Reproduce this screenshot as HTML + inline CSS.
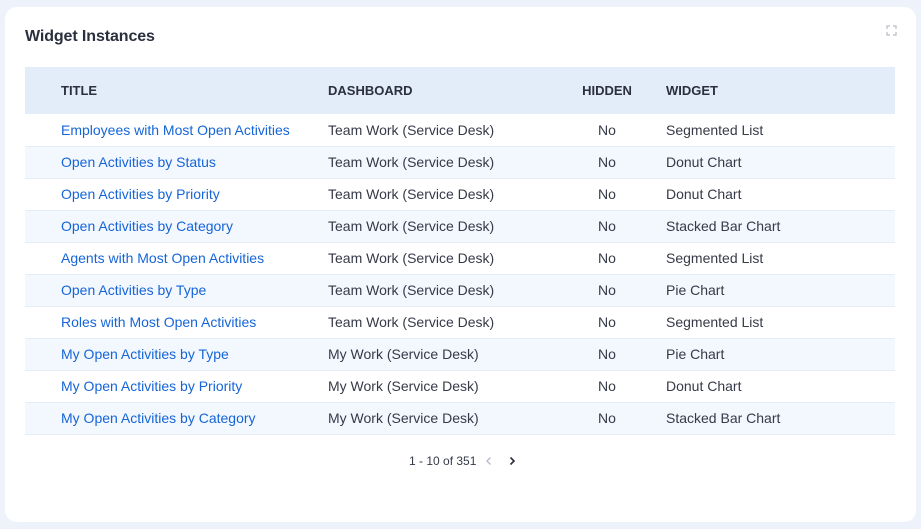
<!DOCTYPE html>
<html><head><meta charset="utf-8"><style>
*{margin:0;padding:0;box-sizing:border-box}
body{width:921px;height:529px;background:#eef3fb;font-family:"Liberation Sans",Arial,sans-serif;position:relative;overflow:hidden}
.card{position:absolute;left:5px;top:7px;width:911px;height:515px;background:#fff;border-radius:12px}
h1{position:absolute;left:20px;top:21px;font-size:16px;font-weight:bold;color:#2b2f3e;letter-spacing:-0.1px}
.exp{position:absolute;left:881px;top:18px}
table{position:absolute;left:20px;top:60px;width:870px;border-collapse:collapse;font-size:14px;color:#363a48;table-layout:fixed}
th{height:47px;background:#e3edfa;text-align:left;font-size:13px;font-weight:bold;color:#2b2f3e}
td{height:32px;border-bottom:1px solid #e6edf7;white-space:nowrap}
tr:nth-child(odd) td{background:#f3f7fe}
td a{color:#1565d8;text-decoration:none}
.c1{padding-left:36px;width:303px}
.c2{width:240px}
.c3{width:78px;text-align:center}
.c4{padding-left:20px}
.pg{position:absolute;left:404px;top:447px;font-size:12px;color:#363a48}
</style></head><body>
<div class="card">
<h1>Widget Instances</h1>
<svg class="exp" width="11" height="11" viewBox="0 0 11 11" fill="none" stroke="#b8bcc6" stroke-width="1.2"><path d="M1 4V1h3M7 1h3v3M10 7v3H7M4 10H1V7"/></svg>
<table>
<tr><th class="c1">TITLE</th><th class="c2">DASHBOARD</th><th class="c3">HIDDEN</th><th class="c4">WIDGET</th></tr>
<tr><td class="c1"><a>Employees with Most Open Activities</a></td><td>Team Work (Service Desk)</td><td class="c3">No</td><td class="c4">Segmented List</td></tr>
<tr><td class="c1"><a>Open Activities by Status</a></td><td>Team Work (Service Desk)</td><td class="c3">No</td><td class="c4">Donut Chart</td></tr>
<tr><td class="c1"><a>Open Activities by Priority</a></td><td>Team Work (Service Desk)</td><td class="c3">No</td><td class="c4">Donut Chart</td></tr>
<tr><td class="c1"><a>Open Activities by Category</a></td><td>Team Work (Service Desk)</td><td class="c3">No</td><td class="c4">Stacked Bar Chart</td></tr>
<tr><td class="c1"><a>Agents with Most Open Activities</a></td><td>Team Work (Service Desk)</td><td class="c3">No</td><td class="c4">Segmented List</td></tr>
<tr><td class="c1"><a>Open Activities by Type</a></td><td>Team Work (Service Desk)</td><td class="c3">No</td><td class="c4">Pie Chart</td></tr>
<tr><td class="c1"><a>Roles with Most Open Activities</a></td><td>Team Work (Service Desk)</td><td class="c3">No</td><td class="c4">Segmented List</td></tr>
<tr><td class="c1"><a>My Open Activities by Type</a></td><td>My Work (Service Desk)</td><td class="c3">No</td><td class="c4">Pie Chart</td></tr>
<tr><td class="c1"><a>My Open Activities by Priority</a></td><td>My Work (Service Desk)</td><td class="c3">No</td><td class="c4">Donut Chart</td></tr>
<tr><td class="c1"><a>My Open Activities by Category</a></td><td>My Work (Service Desk)</td><td class="c3">No</td><td class="c4">Stacked Bar Chart</td></tr>
</table>
<div class="pg">1 - 10 of 351
<svg width="10" height="10" viewBox="0 0 10 10" style="margin-left:4px;vertical-align:-1px" fill="none" stroke="#b8bcc6" stroke-width="1.4"><path d="M6.5 1.5L3 5l3.5 3.5"/></svg>
<svg width="10" height="10" viewBox="0 0 10 10" style="margin-left:10px;vertical-align:-1px" fill="none" stroke="#2b2f3e" stroke-width="1.6"><path d="M3.5 1.5L7 5 3.5 8.5"/></svg>
</div>
</div>
</body></html>
